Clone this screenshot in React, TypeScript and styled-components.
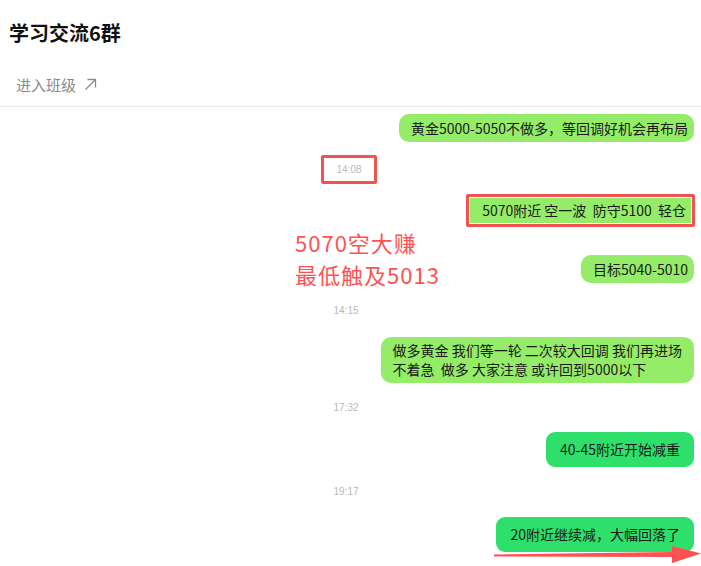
import styled, { createGlobalStyle } from 'styled-components';

const GlobalStyle = createGlobalStyle`
  html, body {
    margin: 0;
    padding: 0;
    background: #fff;
    font-family: "Noto Sans CJK SC", "Noto Sans", sans-serif;
  }
`;

type Msg =
  | { kind: 'time'; text: string; top: number; boxed?: boolean }
  | { kind: 'bubble'; text: string[]; top: number; tone: 'light' | 'dark'; boxed?: boolean };

const messages: Msg[] = [
  { kind: 'bubble', text: ['黄金5000-5050不做多，等回调好机会再布局'], top: 7, tone: 'light' },
  { kind: 'time', text: '14:08', top: 13, boxed: true },
  { kind: 'bubble', text: ['5070附近 空一波  防守5100  轻仓'], top: 10, tone: 'light', boxed: true },
  { kind: 'bubble', text: ['目标5040-5010'], top: 28, tone: 'light' },
  { kind: 'time', text: '14:15', top: 21 },
  { kind: 'bubble', text: ['做多黄金 我们等一轮 二次较大回调 我们再进场', '不着急  做多 大家注意 或许回到5000以下'], top: 19, tone: 'light' },
  { kind: 'time', text: '17:32', top: 18 },
  { kind: 'bubble', text: ['40-45附近开始减重'], top: 17, tone: 'dark' },
  { kind: 'time', text: '19:17', top: 18 },
  { kind: 'bubble', text: ['20附近继续减，大幅回落了'], top: 18, tone: 'dark' },
];

const LinkArrow = () => (
  <svg width="13" height="13" viewBox="0 0 13 13" fill="none" stroke="#8a8a8a" strokeWidth="1.3">
    <path d="M1.5 11.5 L11.5 1.5" />
    <path d="M3.5 1.5 H11.5 V9.5" />
  </svg>
);

export default function App() {
  return (
    <>
      <GlobalStyle />
      <Page>
        <TitleBar>学习交流6群</TitleBar>
        <SubBar>
          进入班级
          <LinkArrow />
        </SubBar>
        <ChatList>
          {messages.map((m, i) =>
            m.kind === 'time' ? (
              <TimeRow key={i} $top={m.top}>
                <TimeLabel $boxed={m.boxed}>{m.text}</TimeLabel>
              </TimeRow>
            ) : (
              <BubbleRow key={i} $top={m.top}>
                {m.boxed ? (
                  <RedFrame>
                    <Bubble $tone={m.tone} $flat>
                      {m.text[0]}
                    </Bubble>
                  </RedFrame>
                ) : (
                  <Bubble $tone={m.tone} $multi={m.text.length > 1}>
                    {m.text.map((line, j) => (
                      <div key={j}>{line}</div>
                    ))}
                  </Bubble>
                )}
              </BubbleRow>
            )
          )}
        </ChatList>
        <Annotation>
          <AnnotationLine>5070空大赚</AnnotationLine>
          <AnnotationLine>最低触及5013</AnnotationLine>
        </Annotation>
        <Arrow viewBox="0 0 210 22" width="210" height="22">
          <polygon points="0,10.5 178,8 178,2 207,9.5 178,19 178,13 0,12.5" fill="#ff5151" />
        </Arrow>
      </Page>
    </>
  );
}

const Page = styled.div`
  position: relative;
  width: 701px;
  height: 566px;
  overflow: hidden;
  background: #fff;
`;

const TitleBar = styled.div`
  height: 64px;
  display: flex;
  align-items: center;
  padding-left: 9px;
  font-size: 20px;
  font-weight: 700;
  color: #111;
`;

const SubBar = styled.div`
  height: 43px;
  display: flex;
  align-items: center;
  gap: 8px;
  padding-left: 16px;
  padding-bottom: 1px;
  box-sizing: border-box;
  border-bottom: 1px solid #e8e8e8;
  font-size: 15px;
  color: #8a8a8a;
`;

const ChatList = styled.div`
  display: flex;
  flex-direction: column;
  width: 692px;
`;

const BubbleRow = styled.div<{ $top: number }>`
  display: flex;
  justify-content: flex-end;
  margin-top: ${(p) => p.$top}px;
  margin-right: -2px;
`;

const TimeRow = styled.div<{ $top: number }>`
  display: flex;
  justify-content: center;
  margin-top: ${(p) => p.$top}px;
`;

const TimeLabel = styled.div<{ $boxed?: boolean }>`
  font-family: "Liberation Sans", Arial, sans-serif;
  font-size: 10px;
  color: #b9b9b9;
  line-height: 14px;
  ${(p) =>
    p.$boxed
      ? `
    width: 50px;
    height: 23px;
    display: flex;
    align-items: center;
    justify-content: center;
    border: 3px solid #f25252;
    border-radius: 2px;
    margin-left: 6px;
  `
      : ''}
`;

const RedFrame = styled.div`
  border: 3px solid #f25252;
  border-radius: 2px;
  padding: 1px;
  display: flex;
  margin-right: -1px;
`;

const Bubble = styled.div<{ $tone: 'light' | 'dark'; $multi?: boolean; $flat?: boolean }>`
  background: ${(p) => (p.$tone === 'light' ? '#95ec69' : '#2ee06b')};
  color: #1a1a1a;
  font-size: 14px;
  white-space: pre;
  border-radius: ${(p) => (p.$flat ? '0' : p.$tone === 'light' ? '10px' : '9px')};
  line-height: ${(p) => (p.$multi ? '19px' : p.$tone === 'dark' ? '35px' : p.$flat ? '25px' : '28px')};
  padding: ${(p) =>
    p.$multi ? '4px 12px' : p.$tone === 'dark' ? '0 14px' : p.$flat ? '0 5px 0 12px' : '0 6px 0 12px'};
`;

const Annotation = styled.div`
  position: absolute;
  left: 295px;
  top: 226px;
  color: #ff5252;
`;

const AnnotationLine = styled.div`
  font-size: 22px;
  letter-spacing: 1px;
  line-height: 32px;
  height: 32px;
`;

const Arrow = styled.svg`
  position: absolute;
  left: 494px;
  top: 544px;
`;
